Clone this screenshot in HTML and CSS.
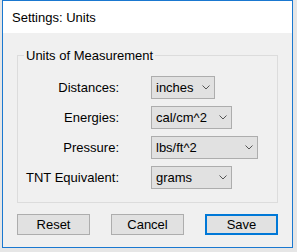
FILE: index.html
```html
<!DOCTYPE html>
<html lang="en">
<head>
    <meta charset="UTF-8">
    <title>Settings: Units</title>
    <link rel="stylesheet" href="styles.css">
</head>
<body>
    <div class="window">
        <div class="titlebar">Settings: Units</div>
        <div class="content">
            <div class="group">
                <span class="legend">Units of Measurement</span>
                <div class="form">
                    <label>Distances:</label>
                    <div class="select w-inches"><span>inches</span>
                        <svg width="8" height="5" viewBox="0 0 8 5"><path d="M0.5 0.5 L4 4 L7.5 0.5" fill="none" stroke="#555" stroke-width="1"/></svg>
                    </div>
                    <label>Energies:</label>
                    <div class="select w-mid"><span>cal/cm^2</span>
                        <svg width="8" height="5" viewBox="0 0 8 5"><path d="M0.5 0.5 L4 4 L7.5 0.5" fill="none" stroke="#555" stroke-width="1"/></svg>
                    </div>
                    <label>Pressure:</label>
                    <div class="select w-wide"><span>lbs/ft^2</span>
                        <svg width="8" height="5" viewBox="0 0 8 5"><path d="M0.5 0.5 L4 4 L7.5 0.5" fill="none" stroke="#555" stroke-width="1"/></svg>
                    </div>
                    <label>TNT Equivalent:</label>
                    <div class="select w-mid"><span>grams</span>
                        <svg width="8" height="5" viewBox="0 0 8 5"><path d="M0.5 0.5 L4 4 L7.5 0.5" fill="none" stroke="#555" stroke-width="1"/></svg>
                    </div>
                </div>
            </div>
            <div class="buttons">
                <button>Reset</button>
                <button>Cancel</button>
                <button class="default">Save</button>
            </div>
        </div>
    </div>
</body>
</html>
```

FILE: styles.css
```css
body {
    margin: 0;
    background: #e6e6e6;
    font-family: "Liberation Sans", Arial, sans-serif;
    font-size: 13px;
    color: #000;
}
.window {
    margin-left: 2px;
    width: 289px;
    height: 246px;
    border: 1px solid #1a78d0;
    background: #f0f0f0;
    display: flex;
    flex-direction: column;
}
.titlebar {
    background: white;
    height: 32px;
    line-height: 32px;
    padding-left: 9px;
    box-sizing: border-box;
    padding-top: 1px;
}
.content {
    padding: 22px 14px 0 14px;
}
.group {
    position: relative;
    border: 1px solid #dcdcdc;
    height: 148px;
    box-sizing: border-box;
    padding-top: 20px;
}
.legend {
    position: absolute;
    left: 6px;
    top: -8px;
    padding: 0 2px;
    background: #f0f0f0;
    line-height: 15px;
}
.form {
    display: grid;
    grid-template-columns: 101px auto;
    column-gap: 32px;
    row-gap: 7px;
    align-items: center;
}
.form label {
    text-align: right;
}
.select {
    height: 23px;
    box-sizing: border-box;
    border: 1px solid #adadad;
    background: #e1e1e1;
    display: flex;
    align-items: center;
    justify-content: space-between;
    padding: 0 4px 0 4px;
}
.select svg {
    display: block;
}
.w-inches {
    width: 64px;
}
.w-mid {
    width: 81px;
}
.w-wide {
    width: 107px;
}
.buttons {
    display: flex;
    justify-content: space-between;
    margin-top: 11px;
}
button {
    width: 73px;
    height: 21px;
    border: 1px solid #adadad;
    background: #e1e1e1;
    font-family: "Liberation Sans", Arial, sans-serif;
    font-size: 13px;
    color: #000;
    padding: 0;
}
button.default {
    border: 2px solid #0078d7;
}
```
